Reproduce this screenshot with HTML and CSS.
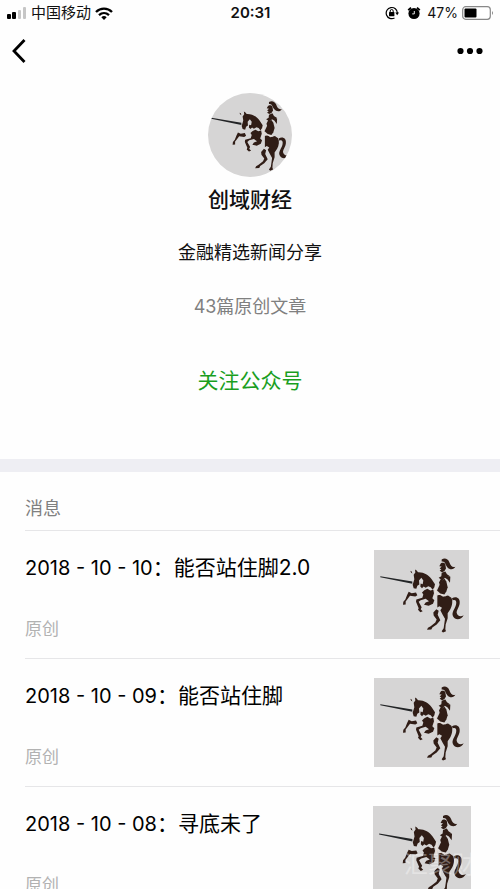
FILE: index.html
```html
<!DOCTYPE html>
<html lang="zh-CN">
<head>
  <meta charset="UTF-8" />
  <meta name="viewport" content="width=device-width, initial-scale=1.0">
  <title>创域财经</title>
  <link rel="stylesheet" href="styles.css">
</head>
<body>

  <!-- shared knight picture -->
  <svg class="defs" aria-hidden="true">
    <symbol id="knight" viewBox="0 0 285 268" preserveAspectRatio="xMidYMid slice">
      <rect width="285" height="268" fill="#d6d5d5" />
      <path d="M19 79 L115 95 L115 102 L19 82 Z" fill="#222426" />
      <g fill="#301d16">
        <!-- helmet, plume and rider -->
        <path d="M203 29 C212 23 222 27 226 37 C230 48 235 54 244 51 C240 60 227 61 220 52 C214 45 214 33 203 35 Z" />
        <path d="M199 43 C202 37 211 38 214 43 L216 56 L211 64 L204 67 L197 63 L202 58 L197 56 L203 50 L196 49 Z" />
        <path d="M203 69 L214 65 L219 73 L229 80 L216 80 L207 90 L202 100 L198 108 L195 98 L200 88 L194 84 L202 79 Z" />
        <path d="M213 76 L229 81 L228 99 L220 88 L211 83 Z" />
        <path d="M205 91 L211 86 L217 95 L221 112 L217 125 L211 134 L199 131 L189 122 L196 107 Z" />
        <!-- head and neck of the horse -->
        <path d="M109 63 L113 65 L115 71 L111 68 Z" />
        <path d="M123 59 L128 62 L132 67 C149 66 164 75 173 88 L183 103 L181 112 L176 120 L170 112 L163 109 L155 114 L149 110 L144 115 L139 110 L140 101 L146 103 L148 92 L142 84 L135 92 L136 104 L130 108 L127 117 L119 115 L116 105 L121 88 L119 75 L124 68 Z" />
        <!-- chest and fore legs -->
        <path d="M151 121 L160 117 L169 122 L178 120 L180 130 L175 145 L181 151 L177 162 L164 168 L150 165 L155 158 L165 154 L155 147 L140 151 L134 156 L143 172 L140 178 L146 184 L139 187 L132 180 L134 175 L126 156 L127 149 L145 144 L148 134 L144 128 Z" />
        <path d="M104 126 L113 130 L126 128 L130 136 L124 140 L108 138 L99 150 L95 155 L95 164 L87 165 L88 156 L94 149 L99 136 Z" />
        <!-- body and hind legs -->
        <path d="M190 137 L198 134 L207 141 L222 137 L232 144 C237 153 235 167 229 178 L221 190 L221 205 L215 224 L214 238 L216 244 L207 248 L203 244 L209 235 L213 207 L206 195 L199 181 L204 174 L196 169 L190 173 Z" />
        <path d="M187 178 L194 183 L191 195 L199 211 L188 224 L175 233 L172 239 L159 240 L162 234 L170 229 L184 218 L188 209 L179 197 L178 188 Z" />
        <!-- tail -->
        <path d="M234 145 C247 138 259 145 257 160 C256 172 247 181 248 189 C250 199 260 202 269 196 C262 211 243 212 237 199 C232 188 243 177 246 165 C249 154 244 148 236 152 Z" />
      </g>
      <path d="M186 104 L183 143 M181 116 L192 133 L215 138" fill="none" stroke="#e9dfd9" stroke-width="3" />
    </symbol>
  </svg>

  <div class="screen">
    <div class="status-bar">
      <div class="status-left">
        <svg class="signal" viewBox="0 0 20 12" aria-hidden="true">
          <rect x="0" y="7" width="4" height="5" rx="1" fill="#000" />
          <rect x="5" y="5" width="4" height="7" rx="1" fill="#000" />
          <rect x="11" y="3" width="3" height="9" rx="1" fill="#c6c6c6" />
          <rect x="16" y="0" width="3" height="12" rx="1" fill="#c6c6c6" />
        </svg>
        <span>中国移动</span>
        <svg class="wifi" viewBox="0 0 18 13" aria-hidden="true">
          <g fill="none" stroke="#000" stroke-width="2.3">
            <path d="M1 5 C5.5 .5 12.5 .5 17 5" />
            <path d="M4 8.2 C7 5.4 11 5.4 14 8.2" />
          </g>
          <path d="M6.3 10.2 Q9 8 11.7 10.2 L9 13 Z" />
        </svg>
      </div>
      <div class="time">20:31</div>
      <div class="status-right">
        <svg class="status-icon" viewBox="0 0 14 14" aria-hidden="true">
          <path d="M9.5 12 A5.6 5.6 0 1 1 12.4 7" fill="none" stroke="#000" stroke-width="1.2" />
          <path d="M10.3 6.5 H14 L12.2 9.2 Z" />
          <rect x="4" y="6" width="5.4" height="4.2" rx=".5" />
          <path d="M5.2 6.5 V5 A1.5 1.5 0 0 1 8.2 5 V6.5" fill="none" stroke="#000" />
        </svg>
        <svg class="status-icon alarm" viewBox="0 0 14 14" aria-hidden="true">
          <circle cx="7" cy="7.5" r="5.6" />
          <path d="M1.2 4.2 L4 1.6 M12.8 4.2 L10 1.6" stroke="#000" stroke-width="1.8" />
          <path d="M7.3 5 V7.9 H5.2" fill="none" stroke="#fff" stroke-width=".9" />
        </svg>
        <span>47%</span>
        <svg class="battery" viewBox="0 0 32 14" aria-hidden="true">
          <rect x=".7" y=".7" width="27.6" height="12.6" rx="3" fill="#fff" stroke="#888" stroke-width="1.2" />
          <rect x="2.5" y="2.5" width="12" height="9" rx="1" />
          <path d="M30 5 Q32 7 30 9 Z" fill="#888" />
        </svg>
      </div>
    </div>

    <header class="nav">
      <button class="nav-btn" type="button" aria-label="返回">
        <svg class="back" viewBox="0 0 14 24"><path d="M12.5 1 L2 12 L12.5 23" fill="none" stroke="#000" stroke-width="2.8" /></svg>
      </button>
      <button class="nav-btn" type="button" aria-label="更多">
        <svg class="more" viewBox="0 0 26 8"><circle cx="3.5" cy="4" r="3.1" /><circle cx="13" cy="4" r="3.1" /><circle cx="22.5" cy="4" r="3.1" /></svg>
      </button>
    </header>

    <section class="profile">
      <svg class="avatar" role="img" aria-label="创域财经"><use href="#knight" /></svg>
      <h1>创域财经</h1>
      <p class="desc">金融精选新闻分享</p>
      <p class="count">43篇原创文章</p>
      <a class="follow" href="#">关注公众号</a>
    </section>

    <main class="messages">
      <h2>消息</h2>
      <a class="message" href="#">
        <div class="message-text">
          <h3><time>2018 - 10 - 10</time>：能否站住脚2.0</h3>
          <span class="tag">原创</span>
        </div>
        <svg class="thumb" aria-hidden="true"><use href="#knight" /></svg>
      </a>
      <a class="message" href="#">
        <div class="message-text">
          <h3><time>2018 - 10 - 09</time>：能否站住脚</h3>
          <span class="tag">原创</span>
        </div>
        <svg class="thumb" aria-hidden="true"><use href="#knight" /></svg>
      </a>
      <a class="message" href="#">
        <div class="message-text">
          <h3><time>2018 - 10 - 08</time>：寻底未了</h3>
          <span class="tag">原创</span>
        </div>
        <svg class="thumb thumb-large" aria-hidden="true"><use href="#knight" /></svg>
      </a>
    </main>

    <div class="watermark">汇聚财经</div>
  </div>

</body>
</html>
```
FILE: styles.css
```css
:root {
  --text-color: #111;
  --muted: #808080;
  --light: #b2b2b2;
  --green: #1a9e1e;
  --line: #e6e6e8;
}
* {
  box-sizing: border-box;
}
body {
  margin: 0;
  background: #fefefe;
  color: var(--text-color);
  font-family: Inter, "Noto Sans CJK SC", sans-serif;
}
h1, h2, h3, p {
  margin: 0;
  font-weight: 400;
}
a {
  color: inherit;
  text-decoration: none;
}
.defs {
  display: block;
  width: 0;
  height: 0;
}
.screen {
  position: relative;
  height: 100vh;
  overflow: hidden;
}

/* status bar */
.status-bar {
  display: grid;
  grid-template-columns: 1fr auto 1fr;
  align-items: center;
  height: 26px;
  padding: 0 6px 0 7px;
  font-size: 15px;
  line-height: 26px;
}
.status-left, .status-right {
  display: flex;
  align-items: center;
}
.status-left {
  gap: 4px;
}
.status-right {
  justify-content: flex-end;
  gap: 4px;
  font-size: 14px;
}
.signal {
  width: 20px;
  height: 12px;
}
.wifi {
  width: 18px;
  height: 13px;
}
.status-icon {
  width: 14px;
  height: 14px;
}
.alarm {
  margin: 0 2px 0 4px;
}
.battery {
  width: 32px;
  height: 14px;
}
.time {
  font-size: 15px;
  font-weight: 600;
}

/* top navigation */
.nav {
  display: flex;
  align-items: center;
  justify-content: space-between;
  height: 50px;
  padding: 0 17px 0 12px;
}
.nav-btn {
  display: flex;
  padding: 0;
  border: 0;
  background: none;
  cursor: pointer;
}
.back {
  width: 14px;
  height: 24px;
}
.more {
  width: 26px;
  height: 8px;
}

/* account */
.profile {
  display: flex;
  flex-direction: column;
  align-items: center;
  padding: 17px 0 62px;
  border-bottom: 13px solid #eeeef3;
}
.avatar {
  width: 84px;
  height: 84px;
  border-radius: 50%;
}
.profile h1 {
  margin-top: 8px;
  font-size: 21px;
  font-weight: 500;
  line-height: 30px;
}
.desc {
  margin-top: 25px;
  font-size: 18px;
  line-height: 26px;
}
.count {
  margin-top: 28px;
  color: var(--muted);
  font-size: 18px;
  line-height: 26px;
}
.follow {
  margin-top: 45px;
  color: var(--green);
  font-size: 21px;
  line-height: 32px;
}

/* message list */
.messages {
  padding-left: 25px;
}
.messages h2 {
  padding: 24px 0 8px;
  color: var(--muted);
  font-size: 18px;
  line-height: 26px;
}
.message {
  display: flex;
  justify-content: space-between;
  align-items: flex-start;
  height: 128px;
  padding: 19px 31px 0 0;
  border-top: 1px solid var(--line);
}
.message-text {
  display: flex;
  flex-direction: column;
  gap: 32px;
  padding-top: 2px;
}
.message h3 {
  color: #000;
  font-size: 21px;
  line-height: 32px;
}
.message time {
  font-size: 20px;
}
.tag {
  color: var(--light);
  font-size: 17px;
  line-height: 26px;
}
.thumb {
  width: 95px;
  height: 89px;
}
.thumb-large {
  width: 98px;
  height: 93px;
  margin-right: -2px;
}

.watermark {
  position: absolute;
  right: 0;
  bottom: 8px;
  color: rgba(255, 255, 255, 0.35);
  font-size: 24px;
  line-height: 32px;
}
```
